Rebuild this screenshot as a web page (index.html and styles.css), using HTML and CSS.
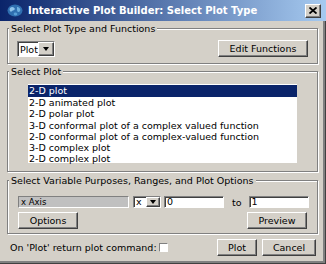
FILE: index.html
```html
<!DOCTYPE html>
<html>
<head>
<meta charset="utf-8">
<link rel="stylesheet" href="styles.css">
</head>
<body>
<div class="window">
  <div class="titlebar">
    <svg class="globe" width="16" height="13" viewBox="0 0 16 13">
      <ellipse cx="8" cy="6.5" rx="7.5" ry="6" fill="#2f6fb0"/>
      <path d="M3 4 C5 2 7 3 8 5 C7 7 5 6 4 8 C3 7 2 6 3 4 Z" fill="#8fc3ea"/>
      <path d="M10 3 C12 3 14 5 13 7 C12 9 10 8 10 6 Z" fill="#6fb0e0"/>
      <path d="M7 9 C9 8 11 9 10 11 C8 12 6 11 7 9 Z" fill="#5aa0d8"/>
    </svg>
    <span class="title">Interactive Plot Builder: Select Plot Type</span>
    <span class="close">
      <svg width="8" height="7" viewBox="0 0 8 7"><path d="M0.5 0.5 L7.5 6.5 M7.5 0.5 L0.5 6.5" stroke="#000" stroke-width="1.8"/></svg>
    </span>
  </div>
  <div class="content">
    <fieldset class="group g1">
      <legend>Select Plot Type and Functions</legend>
      <div class="row1">
        <div class="combo combo-plot"><span class="combo-text">Plot</span><span class="combo-btn"><span class="tri"></span></span></div>
        <button class="btn btn-edit">Edit Functions</button>
      </div>
    </fieldset>
    <fieldset class="group g2">
      <legend>Select Plot</legend>
      <ul class="list">
        <li class="sel">2-D plot</li>
        <li>2-D animated plot</li>
        <li>2-D polar plot</li>
        <li>3-D conformal plot of a complex valued function</li>
        <li>2-D conformal plot of a complex-valued function</li>
        <li>3-D complex plot</li>
        <li>2-D complex plot</li>
      </ul>
    </fieldset>
    <fieldset class="group g3">
      <legend>Select Variable Purposes, Ranges, and Plot Options</legend>
      <div class="varrow">
        <div class="axisbox">x Axis</div>
        <div class="combo combo-x"><span class="combo-text">x</span><span class="combo-btn"><span class="tri"></span></span></div>
        <div class="field">0</div>
        <span class="to">to</span>
        <div class="field">1</div>
      </div>
      <div class="btnrow">
        <button class="btn btn-opt">Options</button>
        <button class="btn btn-opt">Preview</button>
      </div>
    </fieldset>
    <div class="bottom">
      <label class="chk">On 'Plot' return plot command: <span class="box"></span></label>
      <div class="actions">
        <button class="btn btn-plot">Plot</button>
        <button class="btn btn-cancel">Cancel</button>
      </div>
    </div>
  </div>
</div>
</body>
</html>
```

FILE: styles.css
```css
html, body {
  margin: 0;
  padding: 0;
  background: #d4d0c8;
}
.window {
  width: 326px;
  height: 264px;
  box-sizing: border-box;
  background: #d4d0c8;
  font-family: "DejaVu Sans", sans-serif;
  font-size: 9.5px;
  color: #000;
  overflow: hidden;
  box-shadow: inset -1px -1px #404040, inset -3px -3px #808080;
}
.titlebar {
  height: 21px;
  display: flex;
  align-items: center;
  padding: 0 5px 0 7px;
  background: linear-gradient(to right, #0a246a, #a6caf0);
}
.globe {
  margin-right: 5px;
  flex: none;
}
.title {
  flex: 1;
  color: #fff;
  font-weight: bold;
  font-size: 10px;
  white-space: nowrap;
}
.close {
  width: 14px;
  height: 12px;
  background: #d4d0c8;
  border: 1px solid;
  border-color: #fff #404040 #404040 #fff;
  box-shadow: inset -1px -1px #808080;
  display: flex;
  align-items: center;
  justify-content: center;
}
.content {
  padding: 0 8px 0 7px;
}
.group {
  margin: 0;
  padding: 0 1px;
  min-width: 0;
  border: 1px solid #808080;
  box-shadow: inset 1px 1px #fff, 1px 1px #fff;
}
.group legend {
  padding: 0 2px;
  line-height: 11px;
  background: #d4d0c8;
  white-space: nowrap;
}
.g1 {
  margin-top: 2px;
  padding-top: 6px;
  padding-bottom: 6px;
}
.row1 {
  display: flex;
  justify-content: space-between;
  align-items: center;
  padding: 0 8px;
  height: 17px;
}
.combo {
  display: flex;
  box-sizing: border-box;
  background: #fff;
  border: 1px solid;
  border-color: #808080 #fff #fff #808080;
  box-shadow: inset 1px 1px #404040;
}
.combo-plot {
  width: 38px;
  height: 16px;
}
.combo-text {
  flex: 1;
  padding: 2px 0 0 2px;
  line-height: 11px;
}
.combo-btn {
  width: 16px;
  box-sizing: border-box;
  background: #d4d0c8;
  border: 1px solid;
  border-color: #fff #404040 #404040 #fff;
  box-shadow: inset -1px -1px #808080;
  display: flex;
  align-items: center;
  justify-content: center;
}
.tri {
  width: 0;
  height: 0;
  border-left: 3.5px solid transparent;
  border-right: 3.5px solid transparent;
  border-top: 4px solid #000;
}
.btn {
  box-sizing: border-box;
  height: 17px;
  padding: 0;
  margin: 0;
  background: #d4d0c8;
  border: 1px solid;
  border-color: #fff #404040 #404040 #fff;
  box-shadow: inset -1px -1px #808080;
  font: inherit;
  color: #000;
  line-height: 13px;
}
.btn-edit {
  width: 90px;
}
.g2 {
  margin-top: 2px;
  padding-top: 7px;
  padding-bottom: 8px;
}
.list {
  list-style: none;
  margin: 0 19px 0 19px;
  padding: 1px 0 0;
  height: 79px;
  box-sizing: border-box;
  background: #fff;
}
.list li {
  height: 11.3px;
  line-height: 11.3px;
  padding-left: 1px;
  white-space: nowrap;
}
.list li.sel {
  background: #0a246a;
  color: #fff;
  height: 12px;
  line-height: 12px;
}
.g3 {
  margin-top: 3px;
  padding-top: 10px;
  padding-bottom: 4px;
}
.varrow {
  display: flex;
  align-items: center;
  height: 12px;
  padding-left: 9px;
}
.axisbox {
  width: 111px;
  height: 12px;
  box-sizing: border-box;
  background: #c0c0c0;
  border: 1px solid;
  border-color: #808080 #fff #fff #808080;
  padding-left: 2px;
  line-height: 10px;
  font-size: 8.5px;
}
.combo-x {
  width: 28px;
  height: 12px;
  margin-left: 4px;
}
.combo-x .combo-text {
  padding: 0 0 0 2px;
  line-height: 10px;
}
.combo-x .combo-btn {
  width: 14px;
}
.field {
  width: 60px;
  height: 12px;
  box-sizing: border-box;
  background: #fff;
  border: 1px solid;
  border-color: #808080 #fff #fff #808080;
  box-shadow: inset 1px 1px #404040;
  padding-left: 2px;
  line-height: 10px;
  margin-left: 3px;
}
.to {
  margin: 0 7px 0 8px;
}
.to + .field {
  margin-left: 0;
}
.btnrow {
  display: flex;
  justify-content: space-between;
  margin-top: 4px;
  padding: 0 9px;
}
.btn-opt {
  width: 60px;
}
.bottom {
  display: flex;
  align-items: center;
  justify-content: space-between;
  margin-top: 5px;
  height: 17px;
  padding: 0 2px 0 3px;
}
.chk {
  display: flex;
  align-items: center;
  white-space: nowrap;
}
.box {
  display: inline-block;
  width: 9px;
  height: 9px;
  box-sizing: border-box;
  margin-left: 2px;
  background: #fff;
  border: 1px solid;
  border-color: #808080 #fff #fff #808080;
}
.actions {
  display: flex;
  gap: 5px;
}
.btn-plot {
  width: 40px;
}
.btn-cancel {
  width: 54px;
}
```
